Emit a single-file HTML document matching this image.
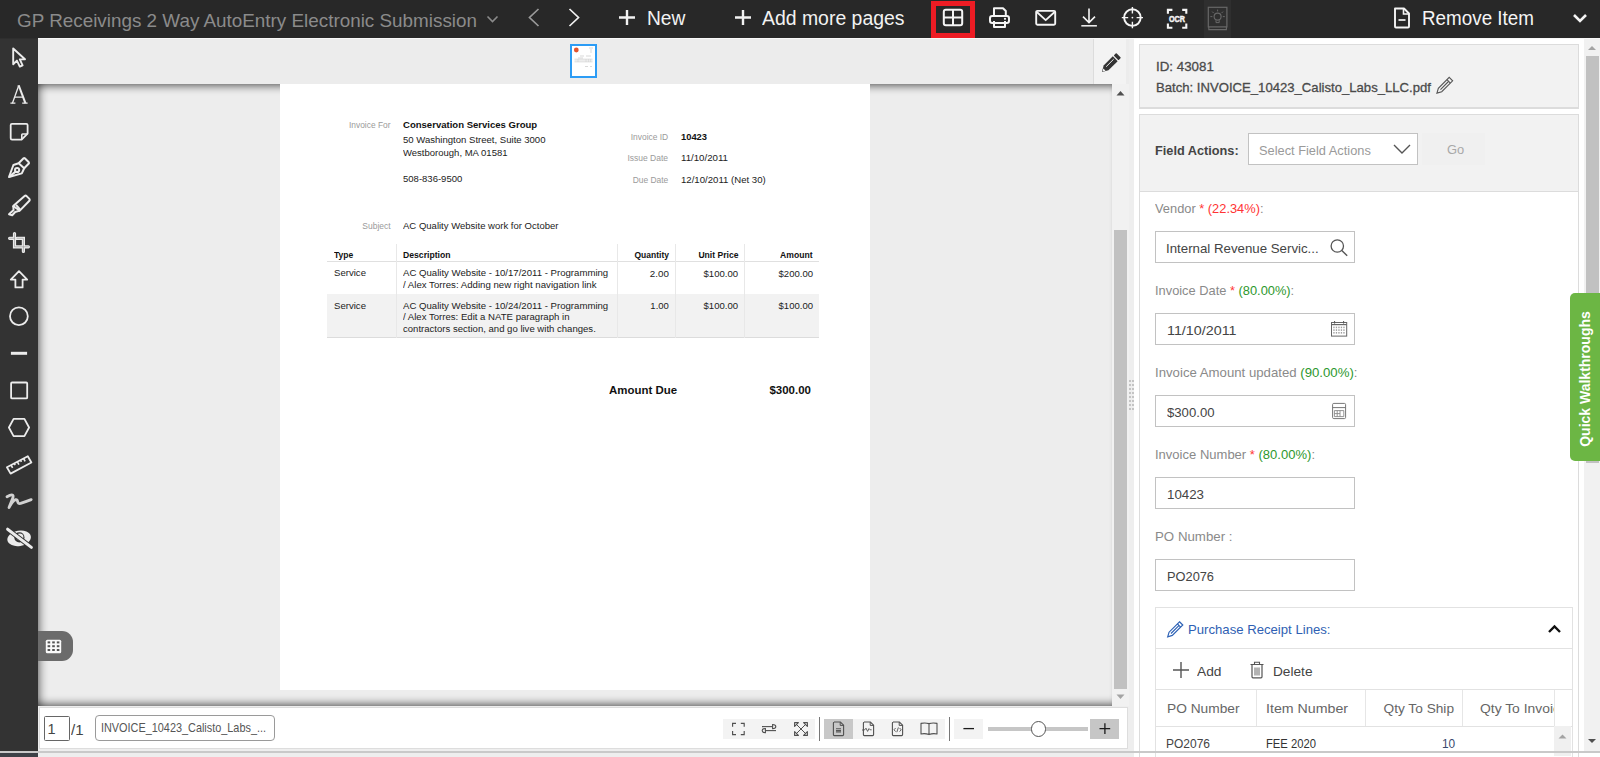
<!DOCTYPE html>
<html><head><meta charset="utf-8"><title>viewer</title><style>*{box-sizing:border-box;margin:0;padding:0}
html,body{width:1600px;height:757px;overflow:hidden;background:#fff;font-family:"Liberation Sans", sans-serif}
.a{position:absolute}
.t{position:absolute;white-space:nowrap;line-height:1;font-family:"Liberation Sans", sans-serif}
svg.a{overflow:visible}</style></head><body>
<div class="a" style="left:0px;top:0px;width:1600px;height:38px;background:#282828"></div>
<div class="a" style="left:38px;top:38px;width:1562px;height:1px;background:#f8f8f8"></div>
<div class="a" style="left:0px;top:38px;width:38px;height:1px;background:#2e2e2e"></div>
<div class="a" style="left:0px;top:39px;width:38px;height:712px;background:#333333"></div>
<div class="a" style="left:38px;top:39px;width:1096px;height:45px;background:#ececec"></div>
<div class="a" style="left:38px;top:84px;width:1074px;height:622px;background:#ededed;overflow:hidden"><div class="a" style="left:0;top:0;width:1074px;height:622px;box-shadow:inset 0 9px 8px -7px rgba(0,0,0,.6),inset 0 -9px 8px -7px rgba(0,0,0,.6),inset 9px 0 8px -7px rgba(0,0,0,.5)"></div><div class="a" style="left:242px;top:0;width:590px;height:606px;background:#fff"></div></div>
<div class="a" style="left:1112px;top:84px;width:17px;height:622px;background:#f1f1f1"></div>
<div class="a" style="left:1114px;top:230px;width:13px;height:459px;background:#c1c1c1"></div>
<svg class="a" style="left:1115px;top:89px;" width="11" height="8" viewBox="0 0 11 8"><path d="M1.5 6.5 L5.5 2 L9.5 6.5 Z" fill="#505050"/></svg>
<svg class="a" style="left:1115px;top:692.5px;" width="11" height="8" viewBox="0 0 11 8"><path d="M1.5 1.5 L5.5 6 L9.5 1.5 Z" fill="#a3a3a3"/></svg>
<div class="a" style="left:1129px;top:39px;width:5px;height:712px;background:#eeeeee"></div>
<svg class="a" style="left:1129px;top:380px;" width="5" height="31" viewBox="0 0 5 31"><rect x="0" y="0" width="2" height="2" fill="#c4c4c4"/><rect x="3" y="0" width="2" height="2" fill="#c4c4c4"/><rect x="0" y="4" width="2" height="2" fill="#c4c4c4"/><rect x="3" y="4" width="2" height="2" fill="#c4c4c4"/><rect x="0" y="8" width="2" height="2" fill="#c4c4c4"/><rect x="3" y="8" width="2" height="2" fill="#c4c4c4"/><rect x="0" y="12" width="2" height="2" fill="#c4c4c4"/><rect x="3" y="12" width="2" height="2" fill="#c4c4c4"/><rect x="0" y="16" width="2" height="2" fill="#c4c4c4"/><rect x="3" y="16" width="2" height="2" fill="#c4c4c4"/><rect x="0" y="20" width="2" height="2" fill="#c4c4c4"/><rect x="3" y="20" width="2" height="2" fill="#c4c4c4"/><rect x="0" y="24" width="2" height="2" fill="#c4c4c4"/><rect x="3" y="24" width="2" height="2" fill="#c4c4c4"/><rect x="0" y="28" width="2" height="2" fill="#c4c4c4"/><rect x="3" y="28" width="2" height="2" fill="#c4c4c4"/></svg>
<div class="a" style="left:1093px;top:39px;width:1px;height:45px;background:#dcdcdc"></div>
<div class="a" style="left:1094px;top:39px;width:32px;height:45px;background:#f3f3f3"></div>
<div class="a" style="left:38px;top:706px;width:1096px;height:51px;background:#eeeeee"></div>
<div class="a" style="left:39px;top:707px;width:1089px;height:42px;background:#fff;border:1px solid #dddddd"></div>
<div class="a" style="left:1134px;top:39px;width:450px;height:712px;background:#fff"></div>
<div class="a" style="left:1584px;top:39px;width:16px;height:712px;background:#f1f1f1"></div>
<div class="a" style="left:1586px;top:56px;width:13px;height:407px;background:#c1c1c1"></div>
<svg class="a" style="left:1587px;top:44px;" width="10" height="8" viewBox="0 0 10 8"><path d="M1 6 L5 2 L9 6 Z" fill="#a3a3a3"/></svg>
<svg class="a" style="left:1587px;top:737px;" width="10" height="8" viewBox="0 0 10 8"><path d="M1 2 L5 6 L9 2 Z" fill="#505050"/></svg>
<span id="t1" class="t" style="transform:scaleX(0.9922);left:16.6px;top:10.55px;font-size:19px;color:#8b8b8b;font-weight:400;transform-origin:left center;">GP Receivings 2 Way AutoEntry Electronic Submission</span>
<svg class="a" style="left:486px;top:15px;" width="13" height="9" viewBox="0 0 13 9"><path d="M1.5 1.5 L6.5 6.5 L11.5 1.5" fill="none" stroke="#8b8b8b" stroke-width="1.6"/></svg>
<svg class="a" style="left:527px;top:8px;" width="14" height="20" viewBox="0 0 14 20"><path d="M11.5 1 L2.5 9.5 L11.5 18" fill="none" stroke="#9a9a9a" stroke-width="1.7"/></svg>
<svg class="a" style="left:567px;top:8px;" width="14" height="20" viewBox="0 0 14 20"><path d="M2.5 1 L11.5 9.5 L2.5 18" fill="none" stroke="#f2f2f2" stroke-width="1.7"/></svg>
<svg class="a" style="left:618px;top:9px;" width="18" height="17" viewBox="0 0 18 17"><path d="M9 1 V16 M1 8.5 H17" fill="none" stroke="#f2f2f2" stroke-width="2.4"/></svg>
<span id="t2" class="t" style="transform:scaleX(0.9596);left:646.8px;top:8.20px;font-size:20px;color:#f2f2f2;font-weight:400;transform-origin:left center;">New</span>
<svg class="a" style="left:734px;top:9px;" width="18" height="17" viewBox="0 0 18 17"><path d="M9 1 V16 M1 8.5 H17" fill="none" stroke="#f2f2f2" stroke-width="2.4"/></svg>
<span id="t3" class="t" style="transform:scaleX(0.9709);left:762.4px;top:8.00px;font-size:20px;color:#f2f2f2;font-weight:400;transform-origin:left center;">Add more pages</span>
<div class="a" style="left:931px;top:1px;width:44px;height:37px;border:5px solid #ed1c24"></div>
<svg class="a" style="left:942px;top:8px;" width="22" height="19" viewBox="0 0 22 19"><rect x="1.8" y="1.8" width="18.4" height="15.4" rx="2" fill="none" stroke="#f5f5f5" stroke-width="2"/><path d="M11 2 V17 M2 9.5 H20" stroke="#f5f5f5" stroke-width="2"/></svg>
<svg class="a" style="left:988px;top:6px;" width="23" height="23" viewBox="0 0 23 23"><path d="M6 10 V2.2 H15 L17.8 5 V10" fill="none" stroke="#f5f5f5" stroke-width="2" stroke-linejoin="round"/><rect x="2" y="10" width="19" height="7" rx="2.2" fill="none" stroke="#f5f5f5" stroke-width="2"/><path d="M6 15 V21 H17 V15" fill="none" stroke="#f5f5f5" stroke-width="2" stroke-linejoin="round"/><circle cx="17" cy="12.8" r="1.1" fill="#f5f5f5"/></svg>
<svg class="a" style="left:1034px;top:9px;" width="23" height="17" viewBox="0 0 23 17"><rect x="2.2" y="1.9" width="19" height="13.8" rx="1.2" fill="none" stroke="#f5f5f5" stroke-width="1.9"/><path d="M2.8 3 L11.7 11.2 L20.6 3" fill="none" stroke="#f5f5f5" stroke-width="1.8" stroke-linejoin="round"/></svg>
<svg class="a" style="left:1080px;top:7px;" width="18" height="21" viewBox="0 0 18 21"><path d="M9 1.4 V15 M3 9.6 L9 15.6 L15 9.6" fill="none" stroke="#f5f5f5" stroke-width="1.6"/><path d="M1.3 18.8 H16.9" stroke="#f5f5f5" stroke-width="1.5"/></svg>
<svg class="a" style="left:1120px;top:5px;" width="25" height="25" viewBox="0 0 25 25"><circle cx="12.4" cy="12.6" r="8.3" fill="none" stroke="#f5f5f5" stroke-width="1.9"/><path d="M12.4 2 V8.4 M12.4 16.8 V23.2 M1.8 12.6 H8.2 M16.6 12.6 H23" stroke="#f5f5f5" stroke-width="1.4"/><circle cx="12.4" cy="12.6" r="0.9" fill="#f5f5f5"/></svg>
<svg class="a" style="left:1166px;top:8px;" width="23" height="22" viewBox="0 0 23 22"><path d="M1.9 5.8 V1.9 H6.4 M16.2 1.9 H20.3 V5.8 M20.3 15.4 V19.8 H16.2 M6.4 19.8 H1.9 V15.4" fill="none" stroke="#f5f5f5" stroke-width="2.1"/><text x="11" y="14.4" text-anchor="middle" font-family="Liberation Sans" font-weight="bold" font-size="9" fill="#f5f5f5" stroke="#f5f5f5" stroke-width="0.5" textLength="16" lengthAdjust="spacingAndGlyphs">OCR</text></svg>
<div class="a" style="left:1204px;top:0px;width:27px;height:38px;background:#2f2f2f"></div>
<svg class="a" style="left:1207px;top:6px;" width="22" height="25" viewBox="0 0 22 25"><rect x="1.3" y="1.3" width="18.6" height="19.6" fill="none" stroke="#686868" stroke-width="1.2"/><path d="M1.8 21 V23.6 H19.4 V21" fill="none" stroke="#686868" stroke-width="1.1"/><circle cx="10.6" cy="10.6" r="3.5" fill="none" stroke="#686868" stroke-width="1.1"/><path d="M9 14.2 V16.6 H12.2 V14.2 M10.6 3.6 V5.4 M5.2 5.6 L6.6 7 M16 5.6 L14.6 7 M3.4 10.6 H5.4 M15.8 10.6 H17.8" fill="none" stroke="#686868" stroke-width="1"/></svg>
<svg class="a" style="left:1393px;top:7px;" width="18" height="22" viewBox="0 0 18 22"><path d="M2 1.5 H11 L16 6.5 V19.5 Q16 20.5 15 20.5 H3 Q2 20.5 2 19.5 Z" fill="none" stroke="#f5f5f5" stroke-width="1.9" stroke-linejoin="round"/><path d="M10.5 1.5 V7 H16" fill="none" stroke="#f5f5f5" stroke-width="1.6"/><path d="M5.5 13 H12.5" stroke="#f5f5f5" stroke-width="1.7"/></svg>
<span id="t4" class="t" style="transform:scaleX(0.9417);left:1422px;top:8.10px;font-size:20px;color:#f5f5f5;font-weight:400;transform-origin:left center;">Remove Item</span>
<svg class="a" style="left:1572px;top:13px;" width="16" height="11" viewBox="0 0 16 11"><path d="M2 2 L8 8 L14 2" fill="none" stroke="#f5f5f5" stroke-width="2.6"/></svg>
<svg class="a" style="left:0px;top:0px;" width="38" height="560" viewBox="0 0 38 560"><path d="M13.2 48.5 V64.2 L16.9 60.6 L19.8 66.6 L22.6 65.3 L19.8 59.4 L25 59.2 Z" fill="none" stroke="#ececec" stroke-width="1.9" stroke-linejoin="round"/><path d="M18.6 86 L12.4 103.2" stroke="#ececec" stroke-width="1.3"/><path d="M18.8 85.6 L25.4 103.2" stroke="#ececec" stroke-width="2"/><path d="M10.4 103.2 H15.4 M22.2 103.2 H27.6 M14.6 97.2 H23.2" stroke="#ececec" stroke-width="1.3"/><path d="M17.6 85.9 H19.8" stroke="#ececec" stroke-width="1.2"/><path d="M12 123.8 H26.3 Q27.6 123.8 27.6 125.1 V133.6 L21.6 139.6 H12 Q10.7 139.6 10.7 138.3 V125.1 Q10.7 123.8 12 123.8 Z" fill="none" stroke="#ececec" stroke-width="1.8" stroke-linejoin="round"/><path d="M27.4 134 H22.6 Q21.8 134 21.8 134.8 V139.6" fill="none" stroke="#ececec" stroke-width="1.6"/><g transform="translate(4 154)" fill="none" stroke="#ececec" stroke-width="2" stroke-linejoin="round"><path d="M14.6 9.2 L19.6 4.3 Q20.2 3.8 20.8 4.3 L24.8 8.3 Q25.3 8.9 24.8 9.5 L20.2 14.3"/><path d="M14.6 9.2 L9.4 11 L5 23 L17.8 19.4 L20.2 14.3 Z"/><circle cx="13.1" cy="16" r="2.1"/><path d="M11.6 17.6 L5.4 22.6"/></g><g transform="translate(4 191)" fill="none" stroke="#ececec" stroke-width="2" stroke-linejoin="round"><path d="M9.2 15 L20.6 5 Q21.6 4.2 22.6 5.1 L25.4 7.9 Q26.2 8.9 25.4 9.8 L15.8 19.6 Z"/><path d="M12 13.8 L16.2 18.6"/><path d="M9.2 15 L9.6 19 L5 23.2 L8.2 24.2 L11.2 21 L15.8 19.6"/></g><g transform="translate(4 228)" fill="none" stroke-linecap="round"><path d="M10.5 5.6 V18.8 H19.4 M5.6 10.3 H10.5 M13 10.3 H19.4 V23.4 M19.4 18.8 H24.4" stroke="#ececec" stroke-width="3.2"/><path d="M10.5 5.6 V18.8 H19.4 M5.6 10.3 H10.5 M13 10.3 H19.4 V23.4 M19.4 18.8 H24.4" stroke="#a0a0a0" stroke-width="0.7"/></g><path d="M19 271.2 L27.2 279.6 H22.6 V287.4 H15.4 V279.6 H10.8 Z" fill="none" stroke="#ececec" stroke-width="1.8" stroke-linejoin="round"/><circle cx="18.9" cy="316.2" r="8.9" fill="none" stroke="#ececec" stroke-width="1.8"/><rect x="10.9" y="351.8" width="16.2" height="3" fill="#ececec"/><rect x="11.1" y="382.5" width="16.1" height="15.9" rx="1" fill="none" stroke="#ececec" stroke-width="1.8"/><path d="M8.9 427.5 L13.6 418.9 H24.4 L29.1 427.5 L24.4 436.1 H13.6 Z" fill="none" stroke="#ececec" stroke-width="1.8" stroke-linejoin="round"/><g transform="translate(4 450)" fill="none" stroke="#ececec" stroke-width="1.8" stroke-linejoin="round"><path d="M2.9 17.3 L23.8 6.3 L27.4 12.5 L6.6 23.6 Z"/><path d="M7.1 15.1 L8.6 17.9 M10.2 13.5 L11.2 15.2 M13.4 11.8 L14.9 14.6 M16.5 10.2 L17.4 11.9 M19.6 8.5 L21.1 11.3" stroke-width="1.6"/></g><path d="M7 496.8 Q10.6 494.6 12.4 495 Q13.8 495.6 12.6 498.6 L9 507.6 Q12.6 500.6 15.6 499.6 Q17.4 499.2 17.6 501.6 Q18 504 20.6 503.4 Q25.4 501.8 31.2 499.6" fill="none" stroke="#d2d2d2" stroke-width="2.8" stroke-linecap="round" stroke-linejoin="round"/><ellipse cx="19.1" cy="538.3" rx="11.9" ry="7.7" transform="rotate(-10 19.1 538.3)" fill="#ececec"/><circle cx="19.4" cy="537.4" r="5.1" fill="#333"/><circle cx="19.8" cy="537" r="3.6" fill="#ececec"/><path d="M6.8 528.6 L32.2 548" stroke="#333" stroke-width="4.8"/><path d="M7.6 529.2 L31.4 547.4" stroke="#ececec" stroke-width="3" stroke-linecap="round"/></svg>
<div class="a" style="left:38px;top:631px;width:35px;height:30px;background:#6b6b6b;border-radius:0 11px 11px 0"></div>
<svg class="a" style="left:45px;top:639px;" width="17" height="15" viewBox="0 0 17 15"><rect x="0.8" y="0.8" width="15.4" height="13.4" rx="1.5" fill="#fafafa"/><rect x="2.6" y="2.4" width="2.6" height="2" fill="#555"/><rect x="2.6" y="6.199999999999999" width="2.6" height="2" fill="#555"/><rect x="2.6" y="10.0" width="2.6" height="2" fill="#555"/><rect x="7.199999999999999" y="2.4" width="2.6" height="2" fill="#555"/><rect x="7.199999999999999" y="6.199999999999999" width="2.6" height="2" fill="#555"/><rect x="7.199999999999999" y="10.0" width="2.6" height="2" fill="#555"/><rect x="11.799999999999999" y="2.4" width="2.6" height="2" fill="#555"/><rect x="11.799999999999999" y="6.199999999999999" width="2.6" height="2" fill="#555"/><rect x="11.799999999999999" y="10.0" width="2.6" height="2" fill="#555"/></svg>
<div class="a" style="left:570px;top:44px;width:27px;height:34px;border:2px solid #2c9cf5;background:#fff"></div>
<svg class="a" style="left:572px;top:46px;" width="23" height="30" viewBox="0 0 23 30"><circle cx="4.3" cy="4" r="2.4" fill="#e5532d"/><path d="M17 2 H21 M18 4 H20 M18 6 H20 M8 10 H12 M14 10 H19 M6 12 H11" stroke="#c8c8c8" stroke-width="0.7"/><rect x="2.5" y="13" width="18" height="3" fill="#ededed"/><path d="M2.5 13 H20.5 M2.5 16 H20.5 M6 13 V16 M14 13 V16 M16.5 13 V16 M18.5 13 V16" stroke="#cfcfcf" stroke-width="0.5"/><path d="M13 20.5 H16 M18 20.5 H20" stroke="#c8c8c8" stroke-width="0.7"/></svg>
<svg class="a" style="left:1098.6px;top:52.6px;" width="22" height="22" viewBox="0 0 22 22"><g transform="rotate(45 11 11)"><rect x="7.6" y="-1.2" width="6.8" height="3.6" rx="0.8" fill="#333"/><path d="M7.6 3.6 H14.4 V16.6 L11 22.4 L7.6 16.6 Z" fill="#333"/><path d="M10.2 5 V15.6" stroke="#f3f3f3" stroke-width="0.9"/><path d="M9.4 18.8 L11 21.6 L12.6 18.8 Z" fill="#f3f3f3"/></g></svg>
<span id="t5" class="t" style="transform:scaleX(0.9761);right:1209.7px;top:120.93px;font-size:8.6px;color:#9a9a9a;font-weight:400;transform-origin:right center;">Invoice For</span>
<span id="t6" class="t" style="transform:scaleX(0.9852);left:402.7px;top:120.00px;font-size:9.7px;color:#111;font-weight:700;transform-origin:left center;">Conservation Services Group</span>
<span id="t7" class="t" style="transform:scaleX(0.9861);left:402.6px;top:135.40px;font-size:9.7px;color:#222;font-weight:400;transform-origin:left center;">50 Washington Street, Suite 3000</span>
<span id="t8" class="t" style="transform:scaleX(0.9817);left:402.6px;top:147.90px;font-size:9.7px;color:#222;font-weight:400;transform-origin:left center;">Westborough, MA 01581</span>
<span id="t9" class="t" style="transform:scaleX(0.9827);left:402.6px;top:173.50px;font-size:9.7px;color:#222;font-weight:400;transform-origin:left center;">508-836-9500</span>
<span id="t10" class="t" style="transform:scaleX(0.9812);right:931.5px;top:132.73px;font-size:8.6px;color:#9a9a9a;font-weight:400;transform-origin:right center;">Invoice ID</span>
<span id="t11" class="t" style="transform:scaleX(0.9904);right:931.5px;top:154.13px;font-size:8.6px;color:#9a9a9a;font-weight:400;transform-origin:right center;">Issue Date</span>
<span id="t12" class="t" style="transform:scaleX(0.9804);right:931.5px;top:175.53px;font-size:8.6px;color:#9a9a9a;font-weight:400;transform-origin:right center;">Due Date</span>
<span id="t13" class="t" style="transform:scaleX(0.9646);left:681px;top:131.60px;font-size:9.7px;color:#111;font-weight:700;transform-origin:left center;">10423</span>
<span id="t14" class="t" style="transform:scaleX(0.9990);left:681px;top:153.20px;font-size:9.7px;color:#222;font-weight:400;transform-origin:left center;">11/10/2011</span>
<span id="t15" class="t" style="transform:scaleX(0.9912);left:681px;top:174.60px;font-size:9.7px;color:#222;font-weight:400;transform-origin:left center;">12/10/2011 (Net 30)</span>
<span id="t16" class="t" style="transform:scaleX(0.9870);right:1209.7px;top:221.93px;font-size:8.6px;color:#9a9a9a;font-weight:400;transform-origin:right center;">Subject</span>
<span id="t17" class="t" style="transform:scaleX(0.9835);left:402.6px;top:221.00px;font-size:9.7px;color:#222;font-weight:400;transform-origin:left center;">AC Quality Website work for October</span>
<div class="a" style="left:327px;top:294px;width:492px;height:44px;background:#f2f2f2"></div>
<div class="a" style="left:327px;top:261px;width:492px;height:1px;background:#e0e0e0"></div>
<div class="a" style="left:327px;top:337px;width:492px;height:1.2px;background:#dcdcdc"></div>
<div class="a" style="left:396px;top:244px;width:1px;height:94px;background:#e8e8e8"></div>
<div class="a" style="left:617px;top:244px;width:1px;height:94px;background:#e8e8e8"></div>
<div class="a" style="left:674.5px;top:244px;width:1px;height:94px;background:#e8e8e8"></div>
<div class="a" style="left:744px;top:244px;width:1px;height:94px;background:#e8e8e8"></div>
<span id="t18" class="t" style="transform:scaleX(0.9620);left:333.6px;top:251.38px;font-size:8.9px;color:#111;font-weight:700;transform-origin:left center;">Type</span>
<span id="t19" class="t" style="transform:scaleX(0.9728);left:403px;top:251.38px;font-size:8.9px;color:#111;font-weight:700;transform-origin:left center;">Description</span>
<span id="t20" class="t" style="transform:scaleX(0.9583);right:931.5px;top:251.38px;font-size:8.9px;color:#111;font-weight:700;transform-origin:right center;">Quantity</span>
<span id="t21" class="t" style="transform:scaleX(0.9653);right:861.8px;top:251.38px;font-size:8.9px;color:#111;font-weight:700;transform-origin:right center;">Unit Price</span>
<span id="t22" class="t" style="transform:scaleX(0.9692);right:787px;top:251.38px;font-size:8.9px;color:#111;font-weight:700;transform-origin:right center;">Amount</span>
<span id="t23" class="t" style="transform:scaleX(0.9903);left:333.6px;top:268.40px;font-size:9.7px;color:#222;font-weight:400;transform-origin:left center;">Service</span>
<span id="t24" class="t" style="transform:scaleX(0.9916);left:403px;top:268.40px;font-size:9.7px;color:#222;font-weight:400;transform-origin:left center;">AC Quality Website - 10/17/2011 - Programming</span>
<span id="t25" class="t" style="transform:scaleX(0.9962);left:403px;top:279.60px;font-size:9.7px;color:#222;font-weight:400;transform-origin:left center;">/ Alex Torres: Adding new right navigation link</span>
<span id="t26" class="t" style="transform:scaleX(1.0075);right:931.5px;top:268.60px;font-size:9.7px;color:#222;font-weight:400;transform-origin:right center;">2.00</span>
<span id="t27" class="t" style="transform:scaleX(0.9848);right:861.8px;top:268.60px;font-size:9.7px;color:#222;font-weight:400;transform-origin:right center;">$100.00</span>
<span id="t28" class="t" style="transform:scaleX(0.9848);right:787px;top:268.60px;font-size:9.7px;color:#222;font-weight:400;transform-origin:right center;">$200.00</span>
<span id="t29" class="t" style="transform:scaleX(0.9903);left:333.6px;top:300.50px;font-size:9.7px;color:#222;font-weight:400;transform-origin:left center;">Service</span>
<span id="t30" class="t" style="transform:scaleX(0.9916);left:403px;top:300.50px;font-size:9.7px;color:#222;font-weight:400;transform-origin:left center;">AC Quality Website - 10/24/2011 - Programming</span>
<span id="t31" class="t" style="transform:scaleX(0.9900);left:403px;top:312.10px;font-size:9.7px;color:#222;font-weight:400;transform-origin:left center;">/ Alex Torres: Edit a NATE paragraph in</span>
<span id="t32" class="t" style="transform:scaleX(0.9863);left:403px;top:323.60px;font-size:9.7px;color:#222;font-weight:400;transform-origin:left center;">contractors section, and go live with changes.</span>
<span id="t33" class="t" style="transform:scaleX(0.9809);right:931.5px;top:300.70px;font-size:9.7px;color:#222;font-weight:400;transform-origin:right center;">1.00</span>
<span id="t34" class="t" style="transform:scaleX(0.9848);right:861.8px;top:300.70px;font-size:9.7px;color:#222;font-weight:400;transform-origin:right center;">$100.00</span>
<span id="t35" class="t" style="transform:scaleX(0.9848);right:787px;top:300.70px;font-size:9.7px;color:#222;font-weight:400;transform-origin:right center;">$100.00</span>
<span id="t36" class="t" style="transform:scaleX(0.9866);left:609px;top:383.50px;font-size:11.6px;color:#111;font-weight:700;transform-origin:left center;">Amount Due</span>
<span id="t37" class="t" style="transform:scaleX(0.9899);right:789px;top:383.50px;font-size:11.6px;color:#111;font-weight:700;transform-origin:right center;">$300.00</span>
<div class="a" style="left:1139px;top:44px;width:440px;height:65px;background:#f2f2f2;border:1px solid #dcdcdc;border-bottom:2px solid #dcdcdc"></div>
<span id="t38" class="t" style="transform:scaleX(0.9804);left:1155.5px;top:59.51px;font-size:13.6px;color:#4a4a4a;font-weight:400;transform-origin:left center;-webkit-text-stroke:0.3px #4a4a4a;">ID: 43081</span>
<span id="t39" class="t" style="transform:scaleX(0.9652);left:1155.5px;top:80.51px;font-size:13.6px;color:#4a4a4a;font-weight:400;transform-origin:left center;-webkit-text-stroke:0.3px #4a4a4a;">Batch: INVOICE_10423_Calisto_Labs_LLC.pdf</span>
<svg class="a" style="left:1434px;top:77px;" width="20" height="18" viewBox="0 0 20 18"><g transform="rotate(45 10 9)" fill="none" stroke="#555" stroke-width="1.1"><path d="M7.6 -0.8 H12.4 V14.6 L10 19 L7.6 14.6 Z"/><path d="M7.6 2.4 H12.4 M10 3 V14"/></g></svg>
<div class="a" style="left:1139px;top:114px;width:440px;height:78px;background:#f2f2f2;border:1px solid #dcdcdc"></div>
<span id="t40" class="t" style="transform:scaleX(0.9365);left:1155.3px;top:143.91px;font-size:13.6px;color:#444;font-weight:700;transform-origin:left center;">Field Actions:</span>
<div class="a" style="left:1248px;top:133px;width:170px;height:32px;background:#fff;border:1px solid #c2c2c2"></div>
<span id="t41" class="t" style="transform:scaleX(0.9423);left:1258.7px;top:143.91px;font-size:13.6px;color:#9a9a9a;font-weight:400;transform-origin:left center;">Select Field Actions</span>
<svg class="a" style="left:1392px;top:143px;" width="20" height="12" viewBox="0 0 20 12"><path d="M2 2 L10 10 L18 2" fill="none" stroke="#555" stroke-width="1.4"/></svg>
<div class="a" style="left:1422px;top:133px;width:63px;height:32px;background:#f0f0f0"></div>
<span id="t42" class="t" style="transform:scaleX(0.9481);left:1446.8px;top:142.71px;font-size:13.6px;color:#a8a8a8;font-weight:400;transform-origin:left center;">Go</span>
<div class="a" style="left:1139px;top:191px;width:440px;height:570px;background:#fff;border:1px solid #dcdcdc;border-top:1px solid #dcdcdc"></div>
<span id="t43" class="t" style="transform:scaleX(0.9444);left:1155.3px;top:201.51px;font-size:13.6px;color:#8a8a8a;font-weight:400;transform-origin:left center;">Vendor <span style="color:#ff3434">* (22.34%)</span>:</span>
<div class="a" style="left:1155px;top:231px;width:200px;height:32px;background:#fff;border:1px solid #c2c2c2"></div>
<span id="t44" class="t" style="transform:scaleX(0.9762);left:1166.4px;top:241.81px;font-size:13.6px;color:#444;font-weight:400;transform-origin:left center;">Internal Revenue Servic...</span>
<svg class="a" style="left:1329px;top:238px;" width="20" height="19" viewBox="0 0 20 19"><circle cx="8.3" cy="8" r="6.2" fill="none" stroke="#555" stroke-width="1.3"/><path d="M12.8 12.5 L18.2 17.8" stroke="#555" stroke-width="1.4"/></svg>
<span id="t45" class="t" style="transform:scaleX(0.9445);left:1155.3px;top:283.61px;font-size:13.6px;color:#8a8a8a;font-weight:400;transform-origin:left center;">Invoice Date <span style="color:#ff3434">*</span> <span style="color:#2d982d">(80.00%)</span>:</span>
<div class="a" style="left:1155px;top:313px;width:200px;height:32px;background:#fff;border:1px solid #c2c2c2"></div>
<span id="t46" class="t" style="transform:scaleX(1.0525);left:1166.5px;top:323.61px;font-size:13.6px;color:#444;font-weight:400;transform-origin:left center;">11/10/2011</span>
<svg class="a" style="left:1330px;top:320px;" width="18" height="17" viewBox="0 0 18 17"><rect x="1.5" y="2.5" width="15.2" height="13.6" fill="none" stroke="#666" stroke-width="1"/><path d="M1.5 4.6 H16.7" stroke="#666" stroke-width="1.2"/><path d="M4.6 1 V3.6 M13.6 1 V3.6" stroke="#555" stroke-width="1"/><rect x="3.3" y="6.6" width="1.3" height="1.6" fill="#a0a0a0"/><rect x="3.3" y="9.3" width="1.3" height="1.6" fill="#a0a0a0"/><rect x="3.3" y="12.0" width="1.3" height="1.6" fill="#a0a0a0"/><rect x="5.8" y="6.6" width="1.3" height="1.6" fill="#a0a0a0"/><rect x="5.8" y="9.3" width="1.3" height="1.6" fill="#a0a0a0"/><rect x="5.8" y="12.0" width="1.3" height="1.6" fill="#a0a0a0"/><rect x="8.3" y="6.6" width="1.3" height="1.6" fill="#a0a0a0"/><rect x="8.3" y="9.3" width="1.3" height="1.6" fill="#a0a0a0"/><rect x="8.3" y="12.0" width="1.3" height="1.6" fill="#a0a0a0"/><rect x="10.8" y="6.6" width="1.3" height="1.6" fill="#a0a0a0"/><rect x="10.8" y="9.3" width="1.3" height="1.6" fill="#a0a0a0"/><rect x="10.8" y="12.0" width="1.3" height="1.6" fill="#a0a0a0"/><rect x="13.3" y="6.6" width="1.3" height="1.6" fill="#a0a0a0"/><rect x="13.3" y="9.3" width="1.3" height="1.6" fill="#a0a0a0"/><rect x="13.3" y="12.0" width="1.3" height="1.6" fill="#a0a0a0"/></svg>
<span id="t47" class="t" style="transform:scaleX(0.9708);left:1155.3px;top:365.61px;font-size:13.6px;color:#8a8a8a;font-weight:400;transform-origin:left center;">Invoice Amount updated <span style="color:#2d982d">(90.00%)</span>:</span>
<div class="a" style="left:1155px;top:395px;width:200px;height:32px;background:#fff;border:1px solid #c2c2c2"></div>
<span id="t48" class="t" style="transform:scaleX(0.9666);left:1166.5px;top:405.51px;font-size:13.6px;color:#444;font-weight:400;transform-origin:left center;">$300.00</span>
<svg class="a" style="left:1331px;top:402px;" width="16" height="18" viewBox="0 0 16 18"><rect x="1.6" y="1.4" width="13" height="15.2" rx="1.2" fill="none" stroke="#777" stroke-width="1"/><path d="M1.6 5.6 H14.6" stroke="#777" stroke-width="1"/><path d="M3.4 8.6 H12.8 V14.6 H3.4 Z M6.2 8.6 V14.6 M9 8.6 V14.6 M3.4 11.6 H9" fill="none" stroke="#888" stroke-width="0.9"/></svg>
<span id="t49" class="t" style="transform:scaleX(0.9580);left:1155.3px;top:447.61px;font-size:13.6px;color:#8a8a8a;font-weight:400;transform-origin:left center;">Invoice Number <span style="color:#ff3434">*</span> <span style="color:#2d982d">(80.00%)</span>:</span>
<div class="a" style="left:1155px;top:477px;width:200px;height:32px;background:#fff;border:1px solid #c2c2c2"></div>
<span id="t50" class="t" style="transform:scaleX(0.9785);left:1166.5px;top:487.51px;font-size:13.6px;color:#444;font-weight:400;transform-origin:left center;">10423</span>
<span id="t51" class="t" style="transform:scaleX(0.9770);left:1155.3px;top:529.61px;font-size:13.6px;color:#8a8a8a;font-weight:400;transform-origin:left center;">PO Number :</span>
<div class="a" style="left:1155px;top:559px;width:200px;height:32px;background:#fff;border:1px solid #c2c2c2"></div>
<span id="t52" class="t" style="transform:scaleX(0.9421);left:1166.5px;top:569.51px;font-size:13.6px;color:#444;font-weight:400;transform-origin:left center;">PO2076</span>
<div class="a" style="left:1155px;top:607px;width:418px;height:160px;background:#fff;border:1px solid #e2e2e2"></div>
<div class="a" style="left:1156px;top:648px;width:416px;height:1px;background:#e2e2e2"></div>
<svg class="a" style="left:1166px;top:622px;" width="17" height="16" viewBox="0 0 17 16"><g transform="rotate(45 8.5 8)" fill="none" stroke="#2f63b6" stroke-width="1.2"><path d="M6.2 -1.4 H10.8 V13.4 L8.5 17.6 L6.2 13.4 Z"/><path d="M6.2 1.6 H10.8 M8.5 2.2 V13"/></g></svg>
<span id="t53" class="t" style="transform:scaleX(0.9670);left:1188.4px;top:623.11px;font-size:13.6px;color:#2f5fb3;font-weight:400;transform-origin:left center;">Purchase Receipt Lines:</span>
<svg class="a" style="left:1547px;top:624px;" width="15" height="10" viewBox="0 0 15 10"><path d="M2 8 L7.5 2.5 L13 8" fill="none" stroke="#111" stroke-width="2.4"/></svg>
<div class="a" style="left:1156px;top:689px;width:416px;height:1px;background:#e2e2e2"></div>
<svg class="a" style="left:1172px;top:661px;" width="18" height="18" viewBox="0 0 18 18"><path d="M9 1 V17 M1 9 H17" stroke="#555" stroke-width="1.4"/></svg>
<span id="t54" class="t" style="transform:scaleX(1.0129);left:1197.3px;top:664.81px;font-size:13.6px;color:#444;font-weight:400;transform-origin:left center;">Add</span>
<svg class="a" style="left:1249px;top:661px;" width="16" height="18" viewBox="0 0 16 18"><path d="M1.5 3.5 H14.5 M5.5 3.2 V1.2 H10.5 V3.2" fill="none" stroke="#555" stroke-width="1.1"/><path d="M3 4 V15.8 Q3 16.8 4 16.8 H12 Q13 16.8 13 15.8 V4" fill="none" stroke="#555" stroke-width="1.2"/><path d="M6 6.5 V14.5 M8 6.5 V14.5 M10 6.5 V14.5" stroke="#555" stroke-width="0.9"/></svg>
<span id="t55" class="t" style="transform:scaleX(1.0052);left:1273.4px;top:664.81px;font-size:13.6px;color:#444;font-weight:400;transform-origin:left center;">Delete</span>
<div class="a" style="left:1156px;top:726px;width:416px;height:1px;background:#e2e2e2"></div>
<div class="a" style="left:1256px;top:690px;width:1px;height:36px;background:#e6e6e6"></div>
<div class="a" style="left:1365px;top:690px;width:1px;height:36px;background:#e6e6e6"></div>
<div class="a" style="left:1462px;top:690px;width:1px;height:36px;background:#e6e6e6"></div>
<div class="a" style="left:1554px;top:690px;width:1px;height:36px;background:#e6e6e6"></div>
<span id="t56" class="t" style="transform:scaleX(1.0102);left:1166.5px;top:701.51px;font-size:13.6px;color:#666;font-weight:400;transform-origin:left center;">PO Number</span>
<span id="t57" class="t" style="transform:scaleX(1.0438);left:1266.2px;top:701.51px;font-size:13.6px;color:#666;font-weight:400;transform-origin:left center;">Item Number</span>
<span id="t58" class="t" style="transform:scaleX(1.0067);right:146.29999999999995px;top:701.51px;font-size:13.6px;color:#666;font-weight:400;transform-origin:right center;">Qty To Ship</span>
<div class="a" style="left:1480px;top:695px;width:74px;height:26px;overflow:hidden"><span id="tq" class="t" style="left:0;top:6.5px;font-size:13.6px;color:#666;transform-origin:left center;transform:scaleX(1.02)">Qty To Invoice</span></div>
<div class="a" style="left:1554px;top:726px;width:17px;height:30px;background:#f0f0f0"></div>
<svg class="a" style="left:1557px;top:732px;" width="11" height="8" viewBox="0 0 11 8"><path d="M1.5 6.5 L5.5 2.5 L9.5 6.5 Z" fill="#a3a3a3"/></svg>
<span id="t59" class="t" style="transform:scaleX(0.8819);left:1165.6px;top:736.71px;font-size:13.6px;color:#444;font-weight:400;transform-origin:left center;">PO2076</span>
<span id="t60" class="t" style="transform:scaleX(0.8269);left:1265.6px;top:736.71px;font-size:13.6px;color:#333;font-weight:400;transform-origin:left center;">FEE 2020</span>
<span id="t61" class="t" style="transform:scaleX(0.8727);right:145.20000000000005px;top:736.71px;font-size:13.6px;color:#3a4a6e;font-weight:400;transform-origin:right center;">10</span>
<div class="a" style="left:1570px;top:293px;width:30px;height:168px;background:#6cb644;border-radius:5px 0 0 5px"></div>
<span class="t" style="left:1585px;top:378.5px;font-size:14px;font-weight:700;color:#fff;transform:translate(-50%,-50%) rotate(-90deg);">Quick Walkthroughs</span>
<div class="a" style="left:44px;top:716px;width:26px;height:25px;background:#fff;border:1.3px solid #666;border-radius:1.5px"></div>
<span id="t62" class="t" style="left:47.4px;top:721.55px;font-size:14.5px;color:#444;font-weight:400;transform-origin:left center;">1</span>
<span id="t63" class="t" style="transform:scaleX(0.9739);left:70.6px;top:721.90px;font-size:15.5px;color:#444;font-weight:400;transform-origin:left center;">/1</span>
<div class="a" style="left:95px;top:715px;width:180px;height:26px;background:#fff;border:1px solid #9a9a9a;border-radius:4px"></div>
<span id="t64" class="t" style="transform:scaleX(0.8496);left:101.2px;top:721.98px;font-size:12.8px;color:#555;font-weight:400;transform-origin:left center;">INVOICE_10423_Calisto_Labs_...</span>
<div class="a" style="left:723px;top:719px;width:92px;height:20px;background:#f3f3f3"></div>
<div class="a" style="left:819px;top:717px;width:1px;height:24px;background:#777"></div>
<div class="a" style="left:824px;top:719px;width:121px;height:20px;background:#f3f3f3"></div>
<div class="a" style="left:824px;top:719px;width:29px;height:20px;background:#c8c8c8"></div>
<div class="a" style="left:949px;top:717px;width:1px;height:24px;background:#777"></div>
<div class="a" style="left:954px;top:719px;width:29px;height:20px;background:#f3f3f3"></div>
<div class="a" style="left:988px;top:727px;width:100px;height:4px;background:#c6c6c6"></div>
<div class="a" style="left:1030.5px;top:721px;width:15.5px;height:15.5px;border-radius:50%;background:#fff;border:1.6px solid #555"></div>
<div class="a" style="left:1090px;top:719px;width:29px;height:20px;background:#c6c6c6"></div>
<svg class="a" style="left:1097px;top:721px;" width="16" height="16" viewBox="0 0 16 16"><path d="M7.9 2.2 V12.9 M2.5 7.6 H13.2" stroke="#1a1a1a" stroke-width="1.3"/></svg>
<svg class="a" style="left:961px;top:724px;" width="15" height="10" viewBox="0 0 15 10"><path d="M2.4 4.6 H13" stroke="#1a1a1a" stroke-width="1.3"/></svg>
<svg class="a" style="left:731px;top:722px;" width="15" height="14" viewBox="0 0 15 14"><path d="M1.6 4.8 V1.4 H5 M9.8 1.4 H13.2 V4.8 M13.2 9 V12.6 H9.8 M5 12.6 H1.6 V9" fill="none" stroke="#505050" stroke-width="1.15"/></svg>
<svg class="a" style="left:760px;top:722px;" width="18" height="14" viewBox="0 0 18 14"><path d="M2 4.6 H12.6" stroke="#505050" stroke-width="1.1"/><path d="M12.6 2.5 Q15.8 2.5 15.8 4.6 Q15.8 6.7 12.6 6.7 Z" fill="none" stroke="#505050" stroke-width="1.1"/><path d="M5.4 8.6 H16" stroke="#505050" stroke-width="1.1"/><path d="M5.4 6.5 Q2.2 6.5 2.2 8.6 Q2.2 10.7 5.4 10.7 Z" fill="none" stroke="#505050" stroke-width="1.1"/></svg>
<svg class="a" style="left:793px;top:721px;" width="16" height="16" viewBox="0 0 16 16"><path d="M3.6 3.6 L12.4 12.4 M12.4 3.6 L3.6 12.4" stroke="#505050" stroke-width="1"/><path d="M1.6 1.6 H5.4 L1.6 5.4 Z M14.4 1.6 H10.6 L14.4 5.4 Z M14.4 14.4 H10.6 L14.4 10.6 Z M1.6 14.4 H5.4 L1.6 10.6 Z" fill="none" stroke="#505050" stroke-width="1.1" stroke-linejoin="round"/></svg>
<svg class="a" style="left:832px;top:721px;" width="13" height="16" viewBox="0 0 13 16"><path d="M2 1 H8.4 L11.6 4.2 V13.6 Q11.6 14.6 10.6 14.6 H2.4 Q1.4 14.6 1.4 13.6 V2 Q1.4 1 2.4 1 Z" fill="none" stroke="#505050" stroke-width="1.1"/><path d="M8.2 1 V4.4 H11.6" fill="none" stroke="#505050" stroke-width="1"/><path d="M4 7.8 H9 M4 9.6 H9 M4 11 H9" stroke="#555" stroke-width="1.1"/></svg>
<svg class="a" style="left:862px;top:721px;" width="13" height="16" viewBox="0 0 13 16"><path d="M2 1 H8.4 L11.6 4.2 V13.6 Q11.6 14.6 10.6 14.6 H2.4 Q1.4 14.6 1.4 13.6 V2 Q1.4 1 2.4 1 Z" fill="none" stroke="#505050" stroke-width="1.1"/><path d="M8.2 1 V4.4 H11.6" fill="none" stroke="#505050" stroke-width="1"/><path d="M0 9 H2.5 L4 7.2 L5.6 10.4 L7 7.6 L8.2 8.8 H9.6" fill="none" stroke="#505050" stroke-width="0.9"/></svg>
<svg class="a" style="left:891px;top:721px;" width="13" height="16" viewBox="0 0 13 16"><path d="M2 1 H8.4 L11.6 4.2 V13.6 Q11.6 14.6 10.6 14.6 H2.4 Q1.4 14.6 1.4 13.6 V2 Q1.4 1 2.4 1 Z" fill="none" stroke="#505050" stroke-width="1.1"/><path d="M8.2 1 V4.4 H11.6" fill="none" stroke="#505050" stroke-width="1"/><path d="M4.6 7 L3 8.8 L4.6 10.6 M8.6 7 L10.2 8.8 L8.6 10.6 M7.4 6.4 L5.8 11.2" fill="none" stroke="#505050" stroke-width="0.9"/></svg>
<svg class="a" style="left:920px;top:721px;" width="18" height="16" viewBox="0 0 18 16"><path d="M1 2.4 Q5 1.4 9 2.6 Q13 1.4 17 2.4 V13 Q13 12 9 13.6 Q5 12 1 13 Z M9 2.6 V13.6" fill="none" stroke="#505050" stroke-width="1.1" stroke-linejoin="round"/></svg>
<div class="a" style="left:0px;top:751px;width:1600px;height:2px;background:#c9c9c9"></div>
<div class="a" style="left:0px;top:753px;width:38px;height:4px;background:#3d4147"></div>
</body></html>
